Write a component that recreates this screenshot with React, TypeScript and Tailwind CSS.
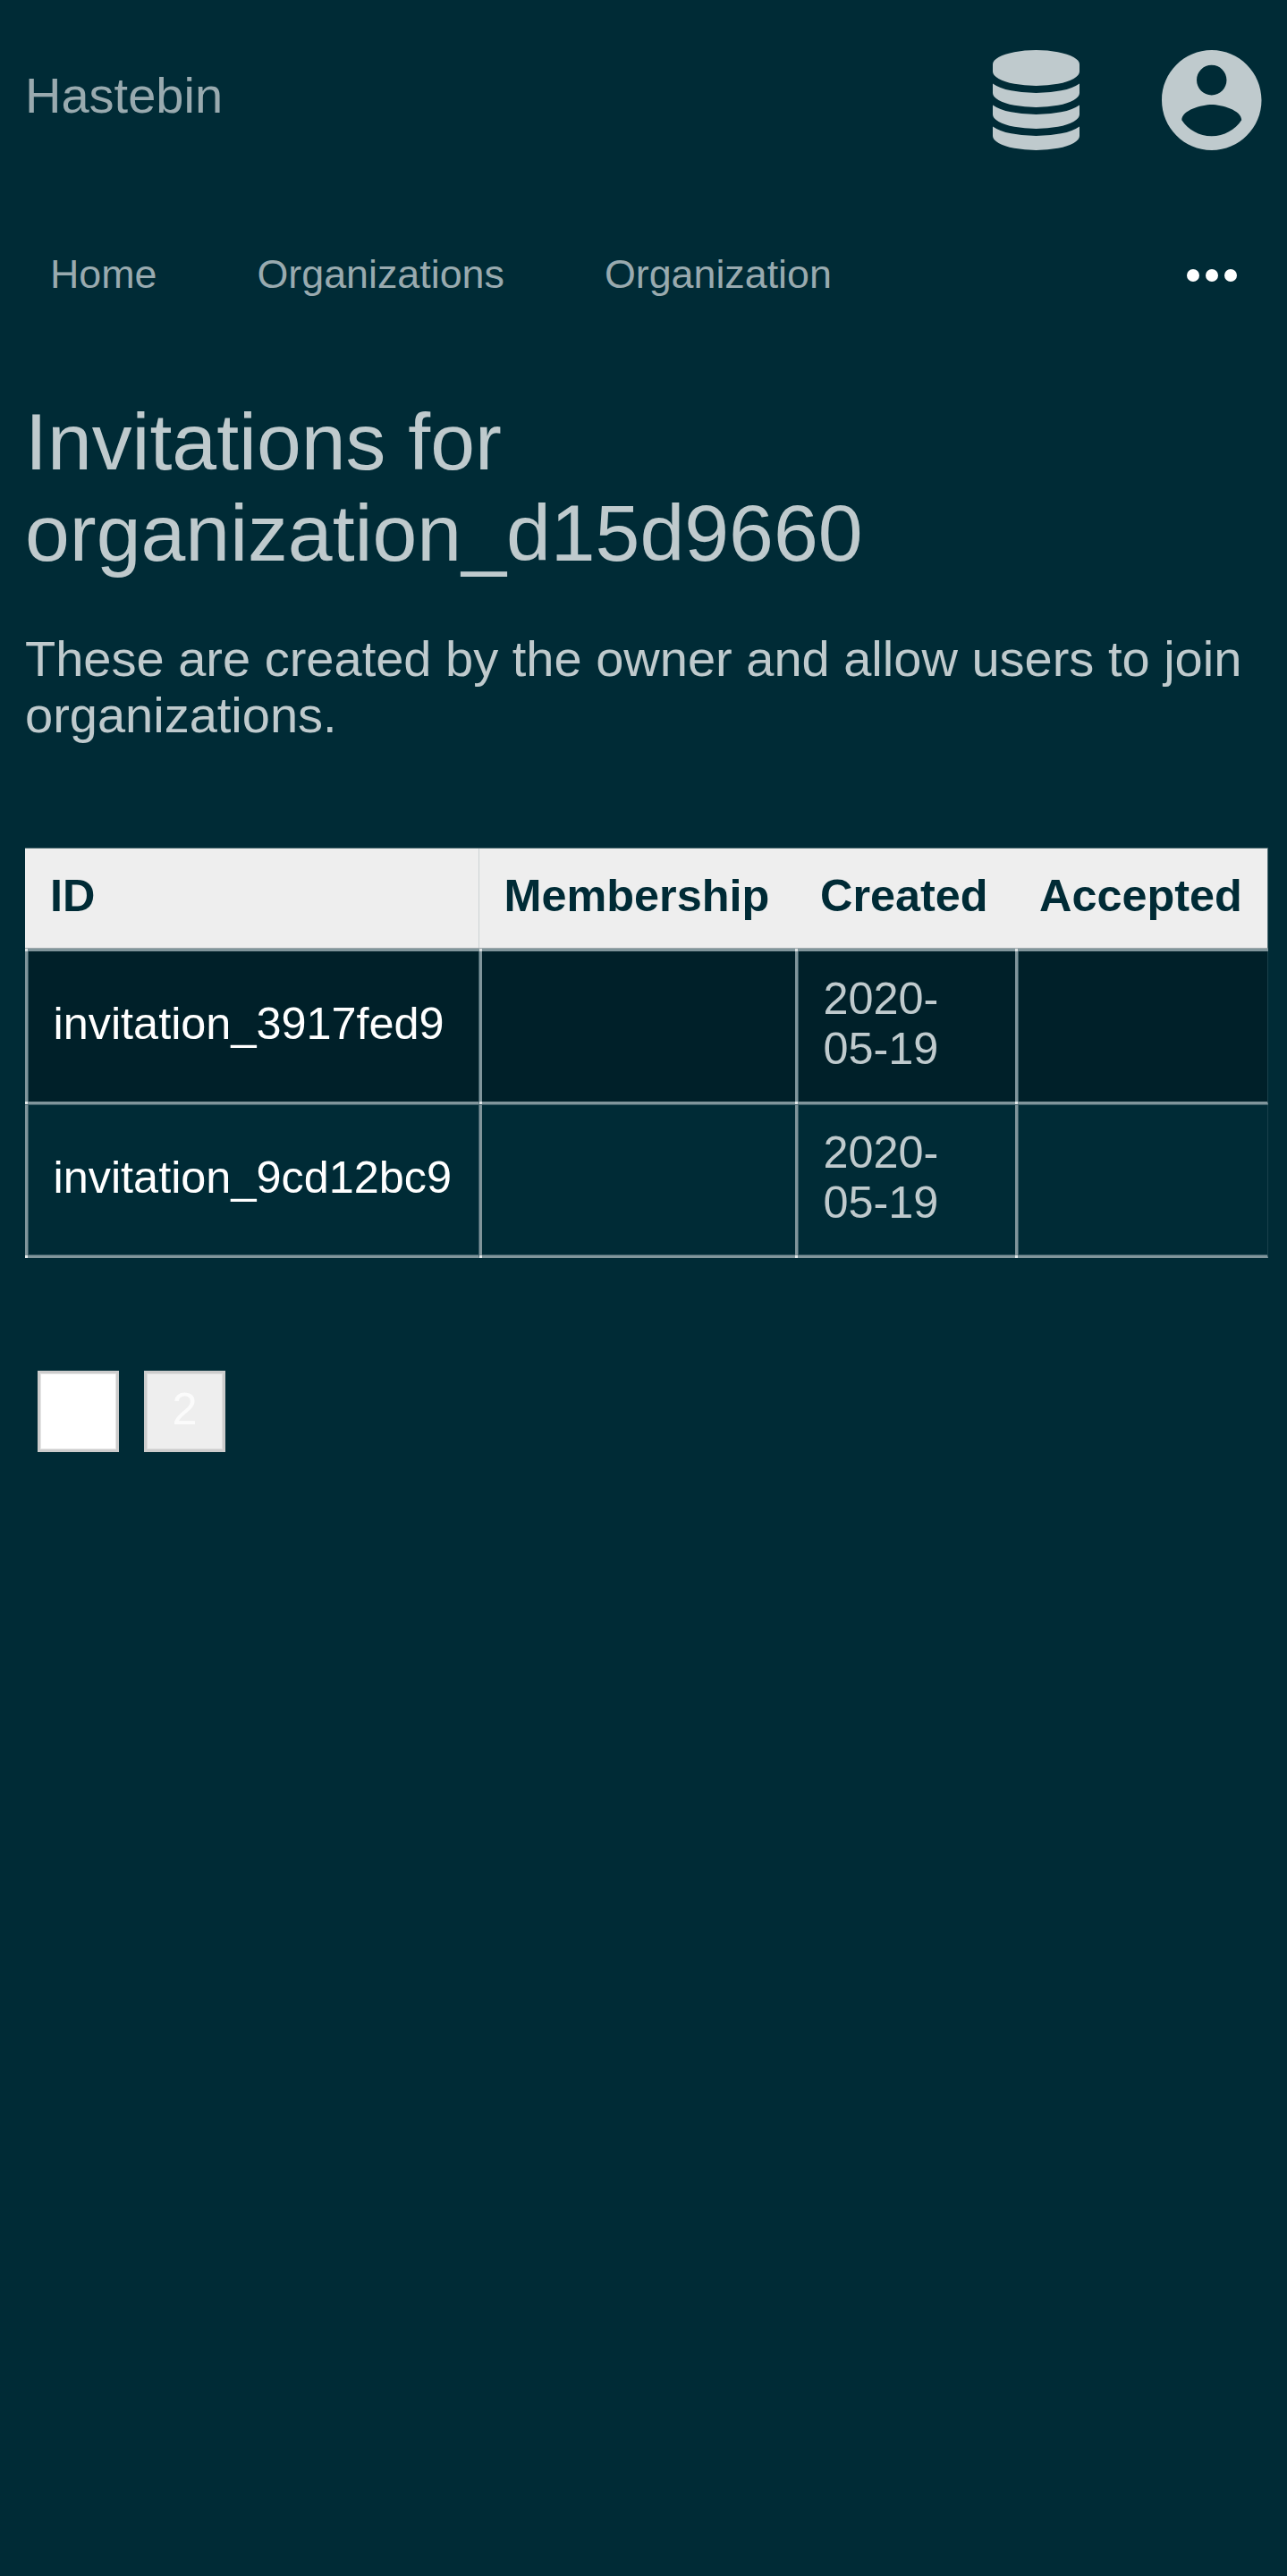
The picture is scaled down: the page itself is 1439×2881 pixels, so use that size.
const headers = [
  { name: 'ID', style: 'pl-[28px]' },
  { name: 'Membership', style: 'border-l border-[#ccd2d4] pl-[27.5px]' },
  { name: 'Created', style: 'pl-[28px]' },
  { name: 'Accepted', style: 'pl-[28px]' },
];

const invitations = [
  {
    id: 'invitation_3917fed9',
    created: ['2020-', '05-19'],
    row: 'h-[172px] border-b border-[#40606a] bg-[#002029] bg-clip-padding',
  },
  { id: 'invitation_9cd12bc9', created: ['2020-', '05-19'], row: 'h-[171px]' },
];

const cell =
  'relative border-b-[3px] border-l-[3px] border-[#80959b] pl-[28.5px] pb-[6px] flex flex-col justify-center whitespace-nowrap';
const edge = 'shadow-[inset_1px_0_0_#40606a]';

/* Brighter square where a column line meets a row line. */
function Joint() {
  return <i className="absolute -bottom-[3px] -left-[3px] size-[3px] bg-[#e3e8e9]" />;
}

function HeadJoint() {
  return <i className="absolute -top-[3px] -left-[3px] size-[3px] bg-[#dde2e3]" />;
}

function DatabaseIcon() {
  return (
    <svg className="h-[112px] w-[97px]" viewBox="0 0 1536 1792" preserveAspectRatio="none" fill="currentColor">
      <path d="M768 768q237 0 443-43t325-127v170q0 69-103 128t-280 93.5-385 34.5-385-34.5-280-93.5-103-128v-170q119 84 325 127t443 43zm0 768q237 0 443-43t325-127v170q0 69-103 128t-280 93.5-385 34.5-385-34.5-280-93.5-103-128v-170q119 84 325 127t443 43zm0-384q237 0 443-43t325-127v170q0 69-103 128t-280 93.5-385 34.5-385-34.5-280-93.5-103-128v-170q119 84 325 127t443 43zm0-1152q208 0 385 34.5t280 93.5 103 128v128q0 69-103 128t-280 93.5-385 34.5-385-34.5-280-93.5-103-128v-128q0-69 103-128t280-93.5 385-34.5z" />
    </svg>
  );
}

function AccountIcon() {
  return (
    <svg className="h-[112px] w-[111.5px]" viewBox="2 2 20 20" preserveAspectRatio="none" fill="currentColor">
      <path d="M12 2C6.48 2 2 6.48 2 12s4.48 10 10 10 10-4.48 10-10S17.52 2 12 2zm0 3c1.66 0 3 1.34 3 3s-1.34 3-3 3-3-1.34-3-3 1.34-3 3-3zm0 14.2c-2.5 0-4.71-1.28-6-3.22.03-1.99 4-3.08 6-3.08 1.99 0 5.97 1.09 6 3.08-1.29 1.94-3.5 3.22-6 3.22z" />
    </svg>
  );
}

export default function App() {
  return (
    <div className="h-[2881px] w-[1439px] overflow-hidden bg-[#002b36] font-['Liberation_Sans',Arial,sans-serif] text-[#bfcacd]">
      <header className="flex h-[224px] items-start pt-[56px] pr-[28.5px] pl-[28px]">
        <a className="mt-[19px] text-[56px] leading-[64px] text-[#99aaaf]">Hastebin</a>
        <div className="ml-auto flex gap-[92px]">
          <DatabaseIcon />
          <AccountIcon />
        </div>
      </header>

      <nav className="flex h-[168px] items-center pr-[56.5px] pl-[56px] text-[44.8px] leading-[52px] text-[#99aaaf]">
        <a className="mb-1">Home</a>
        <a className="mb-1 ml-[112px]">Organizations</a>
        <a className="mb-1 ml-[112px]">Organization</a>
        <span className="ml-auto flex gap-[7px]">
          <i className="size-[14px] rounded-full bg-white" />
          <i className="size-[14px] rounded-full bg-white" />
          <i className="size-[14px] rounded-full bg-white" />
        </span>
      </nav>

      <main className="pl-[28px]">
        <h1 className="mt-[51px] text-[89.6px] leading-[102px]">
          Invitations for
          <br />
          organization_d15d9660
        </h1>
        <p className="mt-[58px] text-[56px] leading-[63px] whitespace-nowrap">
          These are created by the owner and allow users to join
          <br />
          organizations.
        </p>

        <section className="mt-[117px] w-[1390px] text-[50.4px] leading-[56px]">
          <div className="border-b-[3px] border-[#80959b]">
            <div className="grid h-[113px] grid-cols-[507px_354px_245px_283px] border-t border-r border-b border-t-[#4d6b72] border-r-[#4d6b72] border-b-[#a0a9ac] bg-[#eee] font-bold text-[#002b36]">
              {headers.map((h) => (
                <div key={h.name} className={`pt-[25px] ${h.style}`}>
                  {h.name}
                </div>
              ))}
            </div>
          </div>
          {invitations.map((inv, i) => {
            const base = i === 1 ? 'shadow-[inset_1px_-1px_0_#40606a]' : edge;
            const flat = i === 1 ? 'shadow-[inset_0_-1px_0_#40606a]' : '';
            return (
              <div key={inv.id} className={`grid grid-cols-[508px_353px_246px_283px] ${inv.row}`}>
                <div className={`${cell} ${base} border-r border-r-[#40606a] text-white`}>
                  {i === 0 && <HeadJoint />}
                  <Joint />
                  {inv.id}
                </div>
                <div className={`${cell} ${flat}`}>
                  {i === 0 && <HeadJoint />}
                  <Joint />
                </div>
                <div className={`${cell} ${base}`}>
                  {i === 0 && <HeadJoint />}
                  <Joint />
                  <span>{inv.created[0]}</span>
                  <span>{inv.created[1]}</span>
                </div>
                <div className={`${cell} ${base} border-r border-r-[#1a414b]`}>
                  {i === 0 && <HeadJoint />}
                  <Joint />
                </div>
              </div>
            );
          })}
        </section>

        <div className="mt-[126px] ml-[14px] flex gap-[28px] text-[50.4px] leading-[56px] text-white">
          <button className="size-[91px] border-[3px] border-[#ccc] bg-white pb-[6px] shadow-[inset_0_0_0_1px_#e6e6e6]">1</button>
          <button className="size-[91px] border-[3px] border-[#ccc] bg-[#eee] pb-[6px] text-[#fbfbfb] shadow-[inset_0_0_0_1px_#ddd]">2</button>
        </div>
      </main>
    </div>
  );
}
